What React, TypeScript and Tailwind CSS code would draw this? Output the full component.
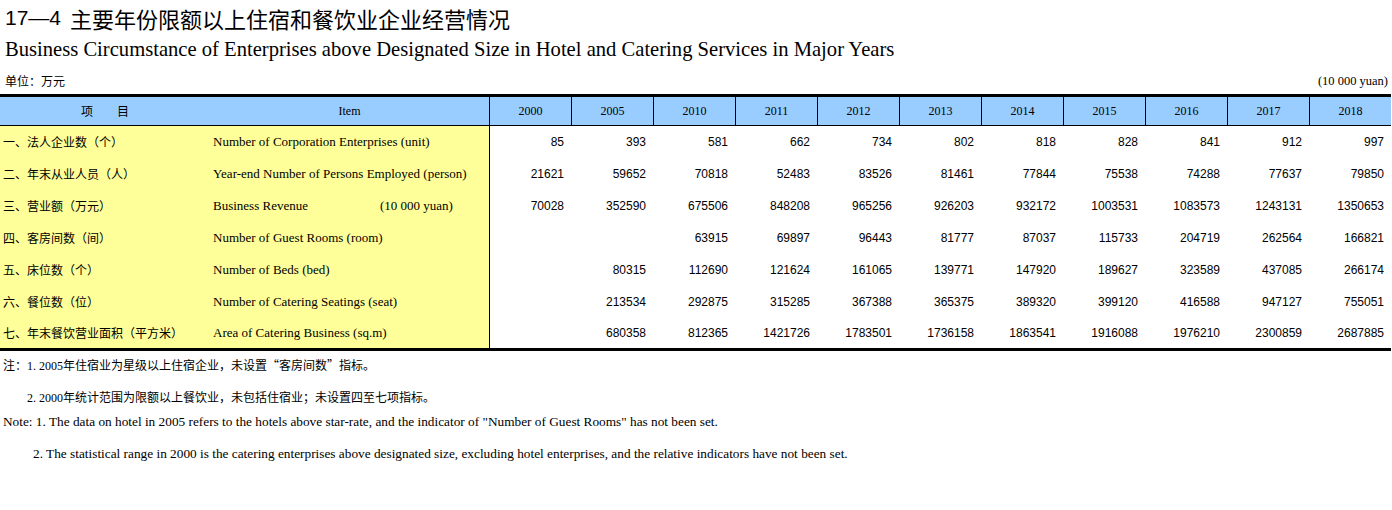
import React from "react";

const years = ["2000", "2005", "2010", "2011", "2012", "2013", "2014", "2015", "2016", "2017", "2018"];

type Row = { cn: string; en: React.ReactNode; vals: string[] };

const rows: Row[] = [
  {
    cn: "一、法人企业数（个）",
    en: "Number of Corporation Enterprises (unit)",
    vals: ["85", "393", "581", "662", "734", "802", "818", "828", "841", "912", "997"],
  },
  {
    cn: "二、年末从业人员（人）",
    en: "Year-end Number of Persons Employed (person)",
    vals: ["21621", "59652", "70818", "52483", "83526", "81461", "77844", "75538", "74288", "77637", "79850"],
  },
  {
    cn: "三、营业额（万元）",
    en: (
      <span className="flex">
        <span className="w-[167px]">Business Revenue</span>
        <span>(10 000 yuan)</span>
      </span>
    ),
    vals: ["70028", "352590", "675506", "848208", "965256", "926203", "932172", "1003531", "1083573", "1243131", "1350653"],
  },
  {
    cn: "四、客房间数（间）",
    en: "Number of Guest Rooms (room)",
    vals: ["", "", "63915", "69897", "96443", "81777", "87037", "115733", "204719", "262564", "166821"],
  },
  {
    cn: "五、床位数（个）",
    en: "Number of Beds (bed)",
    vals: ["", "80315", "112690", "121624", "161065", "139771", "147920", "189627", "323589", "437085", "266174"],
  },
  {
    cn: "六、餐位数（位）",
    en: "Number of Catering Seatings (seat)",
    vals: ["", "213534", "292875", "315285", "367388", "365375", "389320", "399120", "416588", "947127", "755051"],
  },
  {
    cn: "七、年末餐饮营业面积（平方米）",
    en: "Area of Catering Business (sq.m)",
    vals: ["", "680358", "812365", "1421726", "1783501", "1736158", "1863541", "1916088", "1976210", "2300859", "2687885"],
  },
];

const cnFont = "font-['Noto_Sans_CJK_SC','Noto_Sans',sans-serif]";
const serif = "font-['Liberation_Serif','Noto_Sans_CJK_SC',serif]";
const sans = "font-['Liberation_Sans',Arial,sans-serif]";

export default function App() {
  return (
    <div className="w-[1392px] h-[510px] bg-white text-black overflow-hidden">
      <div className={`h-[36px] leading-[36px] pl-[5px] text-[21px] ${cnFont} flex items-center`}>
        <span className={`${sans}`}>17—4</span>
        <span className="ml-[9px] text-[22px]">主要年份限额以上住宿和餐饮业企业经营情况</span>
      </div>
      <div className={`h-[26px] leading-[26px] pl-[5px] text-[20.6px] ${serif}`}>
        Business Circumstance of Enterprises above Designated Size in Hotel and Catering Services in Major Years
      </div>
      <div className="mt-[10px] h-[18px] leading-[18px] flex justify-between pl-[5px] pr-[4px] text-[12px]">
        <span className={cnFont}>单位：万元</span>
        <span className={`${serif} text-[12.5px]`}>(10 000 yuan)</span>
      </div>
      <div className="mt-[4px] w-[1391px] border-t-[3px] border-b-[3px] border-black">
        <div className="flex h-[29px] bg-[#99CCFF] border-b border-black text-[12px]">
          <div className={`w-[210px] flex items-center justify-center ${cnFont}`}>
            <span>项</span>
            <span className="ml-[24px]">目</span>
          </div>
          <div className={`w-[279px] flex items-center justify-center ${serif}`}>Item</div>
          {years.map((y) => (
            <div
              key={y}
              className={`w-[82px] border-l border-black flex items-center justify-center ${serif}`}
            >
              {y}
            </div>
          ))}
        </div>
        {rows.map((r, i) => (
          <div key={i} className={`flex ${i === rows.length - 1 ? "h-[30px]" : "h-[32px]"} text-[12px]`}>
            <div className={`w-[210px] bg-[#FFFF99] flex items-center pl-[3px] ${cnFont}`}>{r.cn}</div>
            <div className={`w-[279px] bg-[#FFFF99] flex items-center pl-[3px] text-[13px] ${serif}`}>{r.en}</div>
            {r.vals.map((v, j) => (
              <div
                key={j}
                className={`w-[82px] flex items-center justify-end pr-[7px] ${sans} ${j === 0 ? "border-l border-black" : ""}`}
              >
                {v}
              </div>
            ))}
          </div>
        ))}
      </div>
      <div className={`h-[28px] leading-[28px] pl-[3px] text-[12px] ${cnFont}`}>
        <span>注：</span>
        <span className={serif}>1. 2005</span>
        <span>年住宿业为星级以上住宿企业，未设置“客房间数”指标。</span>
      </div>
      <div className={`mt-[4px] h-[28px] leading-[28px] pl-[27px] text-[12px] ${cnFont}`}>
        <span className={serif}>2. 2000</span>
        <span>年统计范围为限额以上餐饮业，未包括住宿业；未设置四至七项指标。</span>
      </div>
      <div className={`h-[22px] leading-[22px] pl-[3px] text-[13.3px] ${serif}`}>
        Note: 1. The data on hotel in 2005 refers to the hotels above star-rate, and the indicator of "Number of Guest Rooms" has not been set.
      </div>
      <div className={`mt-[7px] h-[28px] leading-[28px] pl-[33px] text-[13.3px] ${serif}`}>
        2. The statistical range in 2000 is the catering enterprises above designated size, excluding hotel enterprises, and the relative indicators have not been set.
      </div>
    </div>
  );
}
